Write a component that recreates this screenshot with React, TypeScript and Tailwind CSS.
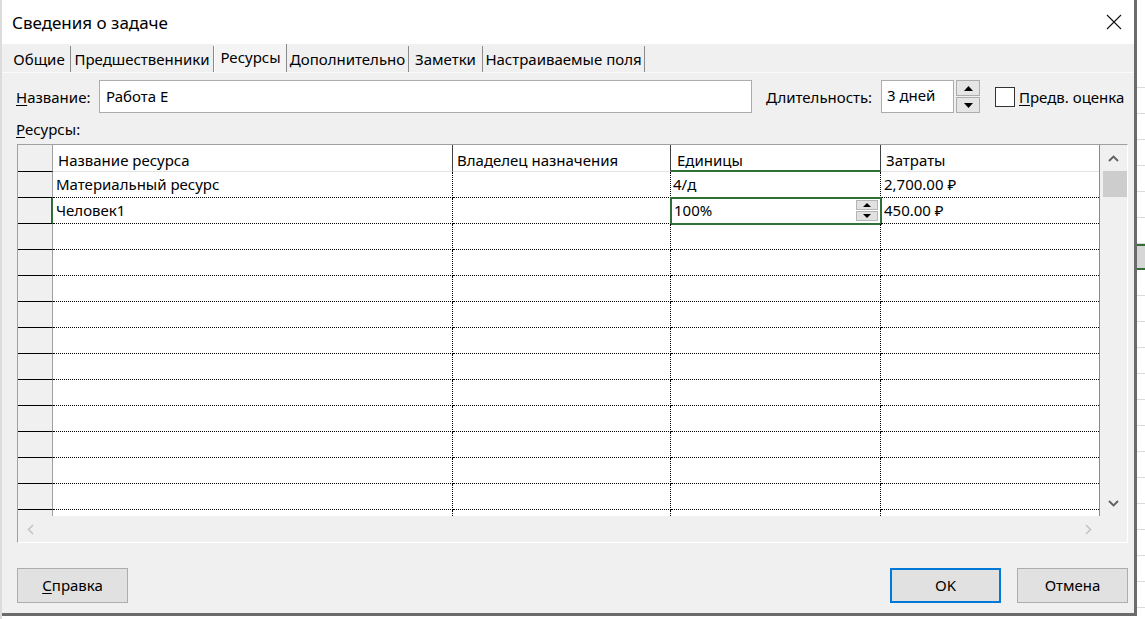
import React from "react";

type Row = { name?: string; units?: string; cost?: string; selected?: boolean };

const rows: Row[] = [
  { name: "Материальный ресурс", units: "4/д", cost: "2,700.00 ₽" },
  { name: "Человек1", units: "100%", cost: "450.00 ₽", selected: true },
  {}, {}, {}, {}, {}, {}, {}, {}, {}, {}, {}, {},
];

const Chevron = ({ dir, className }: { dir: "up" | "down" | "left" | "right"; className?: string }) => {
  if (dir === "up" || dir === "down") {
    return (
      <svg width="11" height="7" viewBox="0 0 11 7" className={className}>
        <path d={dir === "up" ? "M1 6 L5.5 1.5 L10 6" : "M1 1 L5.5 5.5 L10 1"} fill="none" stroke="currentColor" strokeWidth="1.8" />
      </svg>
    );
  }
  return (
    <svg width="7" height="11" viewBox="0 0 7 11" className={className}>
      <path d={dir === "left" ? "M6 1 L1.5 5.5 L6 10" : "M1 1 L5.5 5.5 L1 10"} fill="none" stroke="currentColor" strokeWidth="1.6" />
    </svg>
  );
};

const Tri = ({ up, w = 9, h = 5 }: { up?: boolean; w?: number; h?: number }) => (
  <svg width={w} height={h} viewBox={`0 0 ${w} ${h}`}>
    <path d={up ? `M0 ${h} L${w / 2} 0 L${w} ${h} Z` : `M0 0 L${w / 2} ${h} L${w} 0 Z`} fill="#000" />
  </svg>
);

const tabs = [
  { label: "Общие", w: "w-[63px]" },
  { label: "Предшественники", w: "w-[143px]" },
  { label: "Ресурсы", w: "w-[73px]", active: true },
  { label: "Дополнительно", w: "w-[122px]" },
  { label: "Заметки", w: "w-[74px]" },
  { label: "Настраиваемые поля", w: "w-[162px]" },
];

const TaskInfoDialog = () => {
  return (
    <div className="w-[1135px] h-[616px] shrink-0 flex flex-col bg-[#f0f0f0] border-r-[3px] border-b-[3px] border-[#6b6b6b]">
      {/* заголовок */}
      <div className="h-[44px] bg-white flex items-center justify-between pl-[10px] pr-[12px]">
        <span className="text-[17px] leading-none">Сведения о задаче</span>
        <svg width="16" height="16" viewBox="0 0 16 16">
          <path d="M1 1 L15 15 M15 1 L1 15" stroke="#111" strokeWidth="1.1" />
        </svg>
      </div>

      {/* вкладки */}
      <div className="h-[28px] flex items-end pl-[6px]">
        {tabs.map((t) => (
          <div
            key={t.label}
            className={
              t.active
                ? `${t.w} h-[28px] pb-[2px] bg-[#f4f4f4] border-l border-white border-r border-r-[#8a8a8a] flex items-center justify-center text-[15px]`
                : `${t.w} h-[26px] border-r border-[#8a8a8a] flex items-center justify-center text-[15px]`
            }
          >
            {t.label}
          </div>
        ))}
      </div>

      <div className="flex-1 flex flex-col border-t border-[#fafafa] pt-[7px] pl-[15px] pr-[6px]">
        {/* название / длительность */}
        <div className="h-[33px] flex items-center text-[15px]">
          <div className="w-[83px] pt-[2px] -ml-[1px]">
            <span className="underline underline-offset-2">Н</span>азвание:
          </div>
          <div className="w-[653px] h-[33px] bg-white border border-[#acacac] pl-[6px] pt-[4px] leading-[22px]">Работа Е</div>
          <div className="w-[115px] ml-[14px] pt-[2px]">Длительность:</div>
          <div className="w-[73px] h-[33px] bg-white border border-[#acacac] pl-[5px] pt-[3px] leading-[22px]">3 дней</div>
          <div className="w-[24px] h-[33px] ml-[2px] flex flex-col gap-[1px]">
            <div className="flex-1 bg-[#e5e5e5] border border-[#adadad] flex items-center justify-center">
              <Tri up />
            </div>
            <div className="flex-1 bg-[#e5e5e5] border border-[#adadad] flex items-center justify-center">
              <Tri />
            </div>
          </div>
          <div className="w-[20px] h-[20px] ml-[15px] bg-white border border-[#333]" />
          <div className="ml-[4px] pt-[2px]">
            <span className="underline underline-offset-2">П</span>редв. оценка
          </div>
        </div>

        <div className="h-[31px] pt-[6px] leading-[20px] text-[15px] -ml-[1px]">
          <span className="underline underline-offset-2">Р</span>есурсы:
        </div>

        {/* таблица */}
        <div className="w-[1111px] h-[399px] border border-t-[#a0a0a0] border-l-[#a0a0a0] border-r-white border-b-white flex flex-col bg-white text-[15px]">
          <div className="h-[371px] flex">
            <div className="w-[1082px] overflow-hidden border-r border-[#8a8a8a]">
              {/* шапка */}
              <div className="h-[27px] flex">
                <div className="w-[35px] h-[27px] bg-[#f0f0f0] border-r border-[#a0a0a0] border-b border-b-black" />
                <div className="w-[400px] h-[27px] border-r border-[#404040] border-b border-b-[#e4e4e4] pl-[5px] pt-[5px] leading-[20px]">Название ресурса</div>
                <div className="w-[218px] h-[27px] border-r border-[#404040] border-b border-b-[#e4e4e4] pl-[4px] pt-[5px] leading-[20px]">Владелец назначения</div>
                <div className="w-[210px] h-[27px] border-r border-[#404040] border-b-2 border-b-[#2f6f34] pl-[6px] pt-[5px] leading-[20px]">Единицы</div>
                <div className="w-[218px] h-[27px] border-b border-b-[#e4e4e4] pl-[5px] pt-[5px] leading-[20px]">Затраты</div>
              </div>
              {rows.map((r, i) => (
                <div key={i} className="h-[26px] flex">
                  <div
                    className={
                      r.selected
                        ? "w-[35px] h-[26px] bg-[#f0f0f0] border-r-2 border-[#2f6f34] border-b border-b-black"
                        : "w-[35px] h-[26px] bg-[#f0f0f0] border-r border-[#a0a0a0] border-b border-b-black"
                    }
                  />
                  <div className="w-[400px] h-[26px] border-r border-b border-dotted border-black pl-[3px] leading-[25px] whitespace-nowrap">{r.name}</div>
                  <div className="w-[218px] h-[26px] border-r border-b border-dotted border-black" />
                  {r.selected ? (
                    <div className="w-[210px] h-[26px] flex items-center justify-between outline-2 outline-[#2f6f34] -outline-offset-1 pl-[3px] pr-[2px] border-r border-b border-dotted border-black">
                      <span className="leading-[25px]">{r.units}</span>
                      <div className="w-[22px] h-[21px] flex flex-col gap-[1px]">
                        <div className="flex-1 bg-[#e1e1e1] border border-[#b5b5b5] flex items-center justify-center">
                          <Tri up w={8} h={4} />
                        </div>
                        <div className="flex-1 bg-[#e1e1e1] border border-[#b5b5b5] flex items-center justify-center">
                          <Tri w={8} h={4} />
                        </div>
                      </div>
                    </div>
                  ) : (
                    <div className="w-[210px] h-[26px] border-r border-b border-dotted border-black pl-[2px] leading-[25px]">{r.units}</div>
                  )}
                  <div className="w-[218px] h-[26px] border-b border-dotted border-black pl-[3px] leading-[25px] whitespace-nowrap">{r.cost}</div>
                </div>
              ))}
            </div>
            {/* вертикальная прокрутка */}
            <div className="w-[27px] flex flex-col bg-[#f0f0f0]">
              <div className="h-[26px] flex items-center justify-center text-[#606060]">
                <Chevron dir="up" />
              </div>
              <div className="h-[26px] ml-[3px] bg-[#cdcdcd]" />
              <div className="flex-1" />
              <div className="h-[26px] flex items-center justify-center text-[#606060]">
                <Chevron dir="down" />
              </div>
            </div>
          </div>
          {/* горизонтальная прокрутка */}
          <div className="h-[26px] bg-[#f0f0f0] flex items-center">
            <div className="w-[1082px] flex items-center justify-between pl-[9px] pr-[8px] text-[#c4c4c4]">
              <Chevron dir="left" />
              <Chevron dir="right" />
            </div>
          </div>
        </div>

        {/* кнопки */}
        <div className="mt-[25px] flex items-center text-[15px]">
          <div className="w-[111px] h-[35px] bg-[#e1e1e1] border border-[#adadad] flex items-center justify-center">
            <span>
              <span className="underline underline-offset-2">С</span>правка
            </span>
          </div>
          <div className="flex-1" />
          <div className="w-[111px] h-[35px] bg-[#e1e1e1] border-2 border-[#0078d7] flex items-center justify-center">OK</div>
          <div className="w-[111px] h-[35px] ml-[16px] bg-[#e1e1e1] border border-[#adadad] flex items-center justify-center">Отмена</div>
        </div>
      </div>
    </div>
  );
};

export default function App() {
  return (
    <div className="w-[1145px] h-[619px] overflow-hidden bg-white flex font-['Noto_Sans',sans-serif] text-black">
      <div className="w-[2px] shrink-0 bg-[#dcdcdc]" />
      <TaskInfoDialog />
      <div className="flex-1 flex flex-col bg-white pt-[62px]">
        {Array.from({ length: 21 }).map((_, i) => (
          <div key={i} className={i === 7 ? "h-[26px] shrink-0 border-y-2 border-[#2f6f34] bg-[#d6d6d6]" : "h-[26px] shrink-0 border-b border-[#dadada]"} />
        ))}
      </div>
    </div>
  );
}
